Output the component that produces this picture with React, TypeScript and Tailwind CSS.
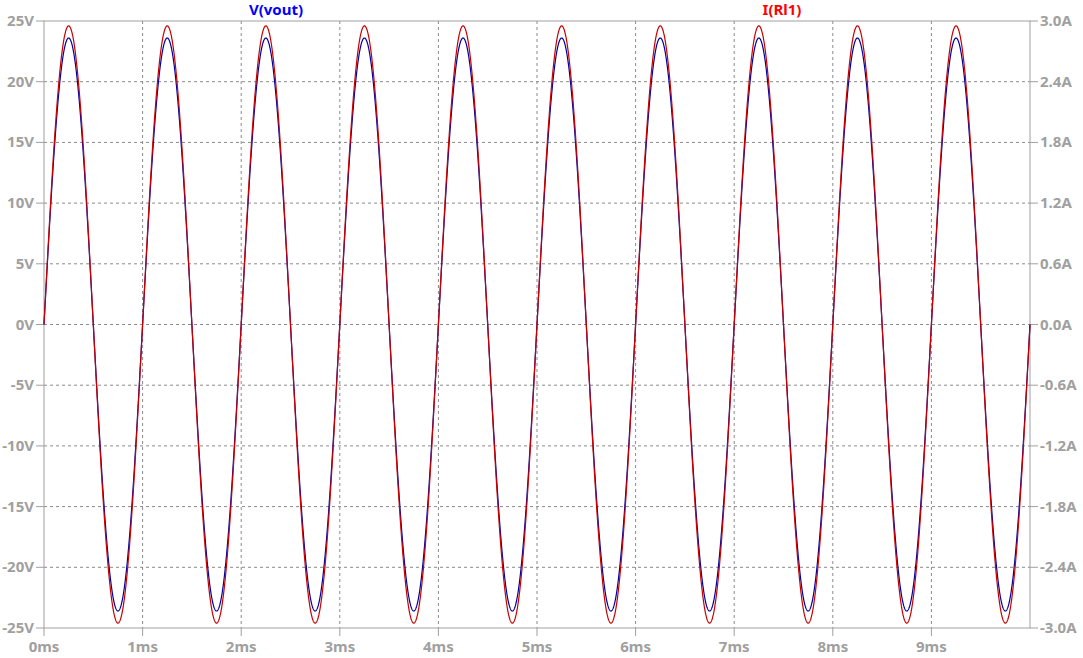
const L = 44;
const R = 1030;
const T = 21;
const B = 628;
const W = R - L;
const H = B - T;

const yv = (v: number) => T + ((25 - v) / 50) * H;
const xt = (ms: number) => L + (ms / 10) * W;

function wave(amp: number) {
  const pts: string[] = [];
  for (let i = 0; i <= 4000; i++) {
    const t = (i / 4000) * 10;
    pts.push(`${xt(t).toFixed(2)},${yv(amp * Math.sin(2 * Math.PI * t)).toFixed(2)}`);
  }
  return pts.join(' ');
}

const vLabels = [25, 20, 15, 10, 5, 0, -5, -10, -15, -20, -25];
const aLabels = ['3.0A', '2.4A', '1.8A', '1.2A', '0.6A', '0.0A', '-0.6A', '-1.2A', '-1.8A', '-2.4A', '-3.0A'];

export default function App() {
  return (
    <div className="w-[1083px] h-[658px] bg-white font-['Liberation_Sans',Arial,sans-serif]">
      <svg width={1083} height={658}>
        {vLabels.map((v, i) => (
          <g key={v}>
            {i > 0 && i < 10 && (
              <line x1={L} x2={R} y1={yv(v)} y2={yv(v)} stroke="#8a8a8a" strokeDasharray="3 3" />
            )}
            <line x1={L - 8} x2={L} y1={yv(v)} y2={yv(v)} stroke="#a0a0a0" />
            <line x1={R} x2={R + 8} y1={yv(v)} y2={yv(v)} stroke="#a0a0a0" />
            <text x={L - 10} y={yv(v) + 5} textAnchor="end" fontSize={15} fontWeight={700} fill="#a0a0a0">
              {v}V
            </text>
            <text x={R + 10} y={yv(v) + 5} fontSize={15} fontWeight={700} fill="#a0a0a0">
              {aLabels[i]}
            </text>
          </g>
        ))}
        {Array.from({ length: 10 }, (_, i) => (
          <g key={i}>
            {i > 0 && <line x1={xt(i)} x2={xt(i)} y1={T} y2={B} stroke="#8a8a8a" strokeDasharray="3 3" />}
            <line x1={xt(i)} x2={xt(i)} y1={B} y2={B + 8} stroke="#a0a0a0" />
            <text x={xt(i)} y={B + 24} textAnchor="middle" fontSize={15} fontWeight={700} fill="#a0a0a0">
              {i}ms
            </text>
          </g>
        ))}
        <rect x={L} y={T} width={W} height={H} fill="none" stroke="#a0a0a0" />
        <polyline points={wave(23.6)} fill="none" stroke="#0000a0" strokeWidth={1.2} />
        <polyline points={wave(24.6)} fill="none" stroke="#c80000" strokeWidth={1.2} />
        <text x={276} y={15} textAnchor="middle" fontSize={15} fontWeight={700} fill="#0000ff">V(vout)</text>
        <text x={782} y={15} textAnchor="middle" fontSize={15} fontWeight={700} fill="#ff0000">I(Rl1)</text>
      </svg>
    </div>
  );
}
